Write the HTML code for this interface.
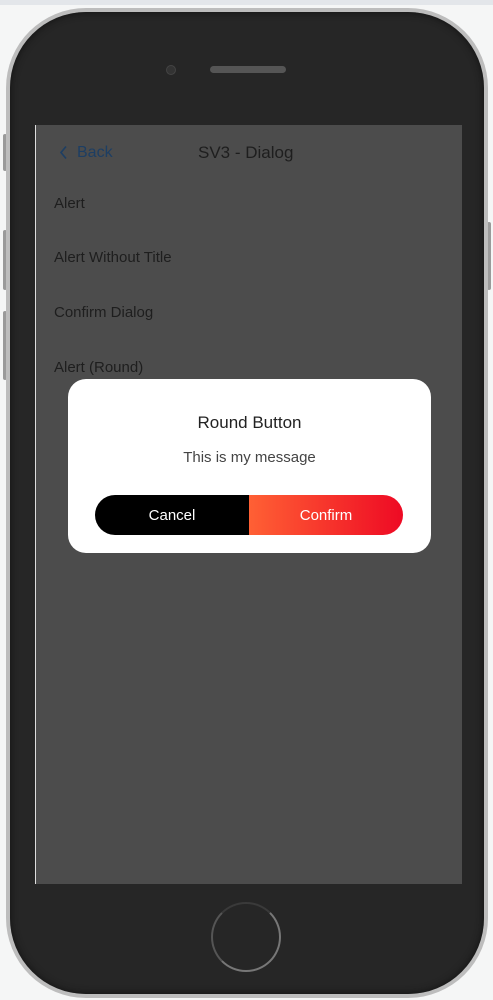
<!DOCTYPE html>
<html><head><meta charset="utf-8"><style>
html,body{margin:0;padding:0;width:493px;height:1000px;overflow:hidden;background:#f5f6f6;font-family:"Liberation Sans",Arial,sans-serif;}
.strip{position:absolute;left:0;top:0;width:493px;height:5px;background:#e3e6ea;}
.btn{position:absolute;background:#9a9a9a;border-radius:2px;width:4px;}
.outer{position:absolute;left:6px;top:8px;width:482px;height:990px;border-radius:80px;background:#bdbdbd;}
.inner{position:absolute;left:10px;top:12px;width:474px;height:982px;border-radius:76px;background:#262626;box-shadow:inset 0 0 8px #111;}
.screen{position:absolute;left:35px;top:125px;width:427px;height:759px;background:#4c4c4c;border-left:1px solid #ddd;box-sizing:border-box;}
.cam{position:absolute;left:166px;top:65px;width:8px;height:8px;border-radius:50%;background:#333;border:1px solid #444;}
.spk{position:absolute;left:210px;top:66px;width:76px;height:7px;border-radius:4px;background:#555;}
.home{position:absolute;left:211px;top:902px;width:70px;height:70px;border-radius:50%;border:2px solid #777;box-sizing:border-box;border-top-color:#3a3a3a;border-left-color:#555;}
.t{position:absolute;color:#1e1e1e;font-size:15px;}
.dlg{position:absolute;left:68px;top:379px;width:363px;height:174px;background:#fff;border-radius:18px;}
.b1,.b2{position:absolute;top:495px;height:40px;line-height:42px;color:#fff;font-size:15px;text-align:center;}
.b1{left:95px;width:154px;background:#000;border-radius:20px 0 0 20px;}
.b2{left:249px;width:154px;background:linear-gradient(90deg,#ff6034,#ee0a24);border-radius:0 20px 20px 0;}
</style></head><body>
<div class="strip"></div>
<div class="btn" style="left:3px;top:134px;height:37px"></div>
<div class="btn" style="left:3px;top:230px;height:60px"></div>
<div class="btn" style="left:3px;top:311px;height:69px"></div>
<div class="btn" style="left:487px;top:222px;height:68px"></div>
<div class="outer"></div>
<div class="inner"></div>
<div class="cam"></div><div class="spk"></div>
<div class="screen"></div>
<div class="home"></div>
<svg style="position:absolute;left:59px;top:145px" width="10" height="16"><path d="M7 1.5 L2 7.5 L7 13.5" stroke="#1d3e63" stroke-width="1.6" fill="none"/></svg>
<div class="t" style="left:77px;top:144px;font-size:16px;color:#1d3e63">Back</div>
<div class="t" style="left:198px;top:143px;font-size:17px">SV3 - Dialog</div>
<div class="t" style="left:54px;top:195px">Alert</div>
<div class="t" style="left:54px;top:249px">Alert Without Title</div>
<div class="t" style="left:54px;top:304px">Confirm Dialog</div>
<div class="t" style="left:54px;top:359px">Alert (Round)</div>
<div class="dlg"></div>
<div class="t" style="left:68px;width:363px;text-align:center;top:413px;font-size:17px;color:#222">Round Button</div>
<div class="t" style="left:68px;width:363px;text-align:center;top:449px;font-size:15px;color:#444">This is my message</div>
<div class="b1">Cancel</div><div class="b2">Confirm</div>
</body></html>
